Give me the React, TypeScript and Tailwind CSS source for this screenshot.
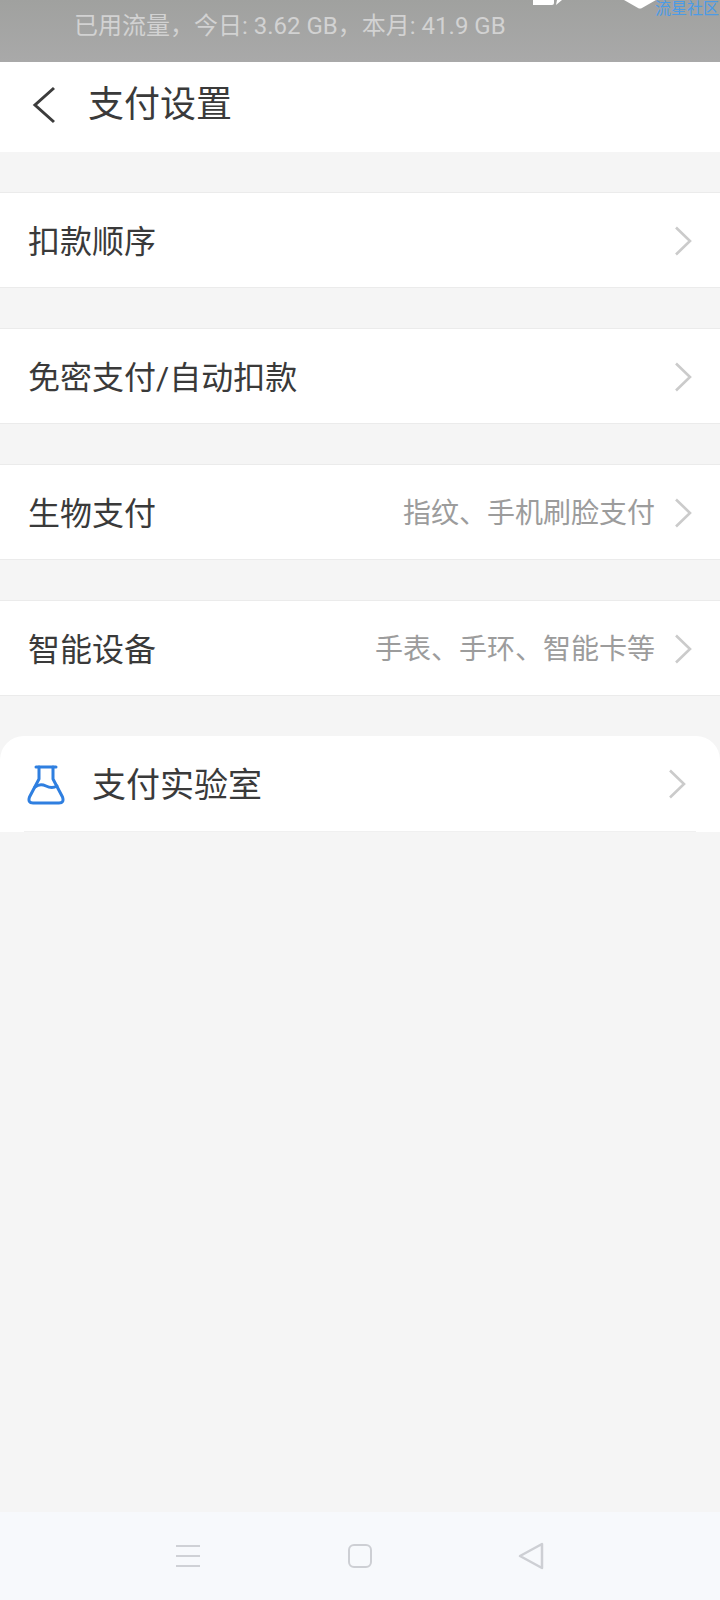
import React from 'react';

const FONT = "font-['Roboto','Noto_Sans_CJK_SC',sans-serif]";

const Chevron: React.FC = () => (
  <svg className="block w-[20px] h-[32px] flex-shrink-0 -mt-[2px]" viewBox="0 0 20 32" fill="none">
    <path d="M3 2.5 L17 16 L3 29.5" stroke="#cbcbcb" strokeWidth="2.6" />
  </svg>
);

const rows = [
  { label: '扣款顺序', hint: '' },
  { label: '免密支付/自动扣款', hint: '' },
  { label: '生物支付', hint: '指纹、手机刷脸支付' },
  { label: '智能设备', hint: '手表、手环、智能卡等' },
];

export default function App() {
  return (
    <div className={`w-[720px] h-[1600px] flex flex-col bg-[#f5f5f5] overflow-hidden ${FONT}`}>
      {/* Status strip */}
      <div className="relative h-[62px] flex-shrink-0 bg-gradient-to-b from-[#a0a19f] to-[#a9a9a9] pl-[74px] pt-[9px] text-[24px] leading-[34px] text-[#d2d2d2] overflow-hidden">
        已用流量，今日: 3.62 GB，本月: 41.9 GB
        <svg className="absolute left-[530px] top-0 w-[32px] h-[8px]" viewBox="0 0 32 8" fill="#ffffff">
          <path d="M3 0 H24 V3 Q24 5 22 5 H3 Z M26 5 L32 0 H27 Z" />
        </svg>
        <svg className="absolute left-[622px] top-0 w-[36px] h-[10px]" viewBox="0 0 36 10" fill="#ffffff">
          <path d="M2 0 H34 L20 8 Q18 9 16 8 Z" />
        </svg>
        <div className="absolute left-[655px] top-0 text-[16px] leading-[18px] text-[#4b9be6] whitespace-nowrap">流星社区</div>
      </div>

      {/* Header */}
      <div className="h-[90px] flex-shrink-0 bg-white flex items-center pl-[32px] pb-[4px]">
        <svg className="w-[24px] h-[38px] flex-shrink-0" viewBox="0 0 24 38" fill="none">
          <path d="M22 2 L3 19 L22 36" stroke="#3c3c3c" strokeWidth="3" />
        </svg>
        <div className="ml-[32px] text-[36px] text-[#3a3a3a] leading-none">支付设置</div>
      </div>

      {/* Rows */}
      <div className="pt-[40px] flex flex-col gap-[40px]">
        {rows.map((row) => (
          <div key={row.label} className="h-[96px] bg-white border-y border-[#ebebeb] flex items-center pl-[28px] pr-[27px] pt-[3px]">
            <div className="text-[32px] text-[#3a3a3a] leading-none">{row.label}</div>
            <div className="ml-auto text-[28px] text-[#9c9c9c] leading-none mr-[18px]">{row.hint}</div>
            <Chevron />
          </div>
        ))}

        {/* Lab row */}
        <div className="relative h-[96px] bg-white rounded-t-[24px] flex items-center pl-[27px] pr-[33px] pt-[2px]">
          <svg className="w-[38px] h-[40px] flex-shrink-0" viewBox="0 0 38 40" fill="none" stroke="#2f7fe0" strokeWidth="3" strokeLinejoin="round" strokeLinecap="round">
            <path d="M9 2 H29" />
            <path d="M12 2 V14 L2.5 32 Q0.5 38 6 38 H32 Q37.5 38 35.5 32 L26 14 V2" />
            <path d="M8 22 Q13 18 19 21 Q25 24 30 21" />
          </svg>
          <div className="ml-[27px] text-[34px] text-[#3a3a3a] leading-none">支付实验室</div>
          <div className="ml-auto">
            <Chevron />
          </div>
          <div className="absolute left-[24px] right-[24px] bottom-0 h-px bg-[#f0f0f0]" />
        </div>
      </div>

      <div className="flex-1" />

      {/* Nav bar */}
      <div className="h-[88px] flex-shrink-0 bg-[#f7f9fc] flex items-center justify-center">
        <div className="w-[24px] flex flex-col gap-[8px]">
          <div className="h-[2px] bg-[#cfd1d6]" />
          <div className="h-[2px] bg-[#cfd1d6]" />
          <div className="h-[2px] bg-[#cfd1d6]" />
        </div>
        <div className="ml-[148px] w-[24px] h-[24px] rounded-[6px] border-[2.5px] border-[#cdcfd4]" />
        <svg className="ml-[146px] w-[26px] h-[28px]" viewBox="0 0 26 28" fill="none">
          <path d="M24 2 V26 L2 14 Z" stroke="#cdcfd4" strokeWidth="2.5" strokeLinejoin="round" />
        </svg>
      </div>
    </div>
  );
}
